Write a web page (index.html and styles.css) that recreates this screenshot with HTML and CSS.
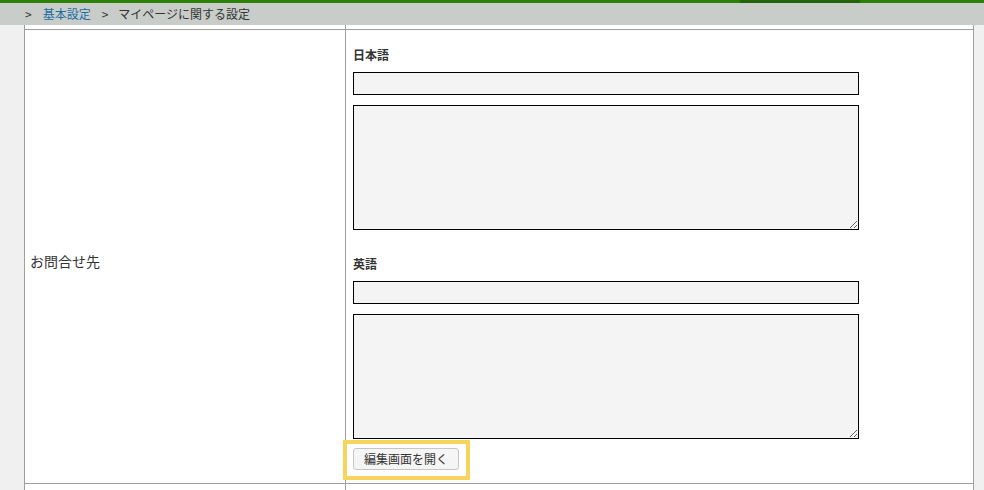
FILE: index.html
```html
<!DOCTYPE html>
<html lang="ja">
<head>
<meta charset="utf-8">
<title>マイページに関する設定</title>
<link rel="stylesheet" href="styles.css">
</head>
<body>
<div class="topbar"><span class="seg"></span><span class="seg seg-active"></span><span class="seg"></span></div>
<nav class="breadcrumb">
  <span class="sep">&gt;</span><a href="#" class="crumb-link">基本設定</a><span class="sep sep-mid">&gt;</span><span class="crumb-current">マイページに関する設定</span>
</nav>
<div class="main">
  <div class="gutter"></div>
  <div class="table">
    <div class="row row-prev">
      <div class="cell cell-label"></div>
      <div class="cell cell-value"></div>
    </div>
    <div class="row">
      <div class="cell cell-label label-main">お問合せ先</div>
      <div class="cell cell-value value-main">
        <div class="lang-group">
          <div class="lang-label">日本語</div>
          <input type="text" class="text-input">
          <textarea class="text-area"></textarea>
        </div>
        <div class="lang-group lang-group-next">
          <div class="lang-label">英語</div>
          <input type="text" class="text-input">
          <textarea class="text-area"></textarea>
        </div>
        <div class="highlight"><button class="edit-btn" type="button">編集画面を開く</button></div>
      </div>
    </div>
    <div class="row row-next">
      <div class="cell cell-label"></div>
      <div class="cell cell-value"></div>
    </div>
  </div>
  <div class="gutter gutter-right"></div>
</div>
</body>
</html>
```

FILE: styles.css
```css
html, body {
  margin: 0;
  padding: 0;
  background: #ffffff;
  font-family: "Noto Sans CJK JP", "Noto Sans", sans-serif;
  color: #333333;
  overflow: hidden;
}

.topbar {
  display: grid;
  grid-template-columns: 740px 120px 1fr;
  height: 3px;
}
.seg { background: #2c8006; }
.seg-active { background: #226407; }

.breadcrumb {
  height: 22px;
  line-height: 22px;
  background: #c8cdc9;
  padding-left: 25px;
  font-size: 12px;
  color: #333333;
  white-space: nowrap;
}
.sep { margin-right: 11px; }
.sep-mid { margin-left: 11px; margin-right: 10px; }
.crumb-link { color: #1d6da3; text-decoration: none; }

.main {
  display: flex;
  height: 465px;
}
.gutter {
  width: 24px;
  background: #eff0ef;
  flex: none;
}
.gutter-right {
  width: auto;
  flex: 1;
}
.table {
  width: 950px;
  box-sizing: border-box;
  border-left: 1px solid #9e9e9e;
  border-right: 1px solid #9e9e9e;
  background: #ffffff;
  flex: none;
}
.row {
  display: grid;
  grid-template-columns: 321px 1fr;
  border-bottom: 1px solid #9e9e9e;
}
.row-prev { height: 4px; }
.row-next { height: 30px; border-bottom: none; }
.cell-label { border-right: 1px solid #9e9e9e; }

.label-main {
  display: flex;
  align-items: center;
  padding: 9px 0 0 5px;
  font-size: 14px;
  color: #333333;
}
.value-main {
  padding: 16px 0 3px 7px;
}
.lang-label {
  font-size: 12px;
  font-weight: bold;
  line-height: 18px;
  margin-bottom: 8px;
  color: #333333;
}
.lang-group-next { margin-top: 25px; }
.text-input {
  display: block;
  box-sizing: border-box;
  width: 506px;
  height: 23px;
  margin: 0 0 10px 0;
  border: 1px solid #000000;
  border-radius: 0;
  background: #f3f4f3;
  padding: 2px 4px;
  font-size: 12px;
  font-family: inherit;
}
.text-area {
  display: block;
  box-sizing: border-box;
  width: 506px;
  height: 125px;
  margin: 0;
  border: 1px solid #000000;
  border-radius: 0;
  background: #f3f4f3;
  padding: 2px 4px;
  font-size: 12px;
  font-family: inherit;
}
.highlight {
  display: inline-block;
  margin: 1px 0 0 -10px;
  border: 4px solid #f8d55a;
  padding: 4px 7px 6px 6px;
}
.edit-btn {
  display: block;
  width: 106px;
  height: 22px;
  padding: 0;
  margin: 0;
  border: 1px solid #c6c6c6;
  border-radius: 3px;
  background: #f4f5f4;
  color: #333333;
  font-size: 12px;
  font-family: inherit;
  line-height: 20px;
}
```
